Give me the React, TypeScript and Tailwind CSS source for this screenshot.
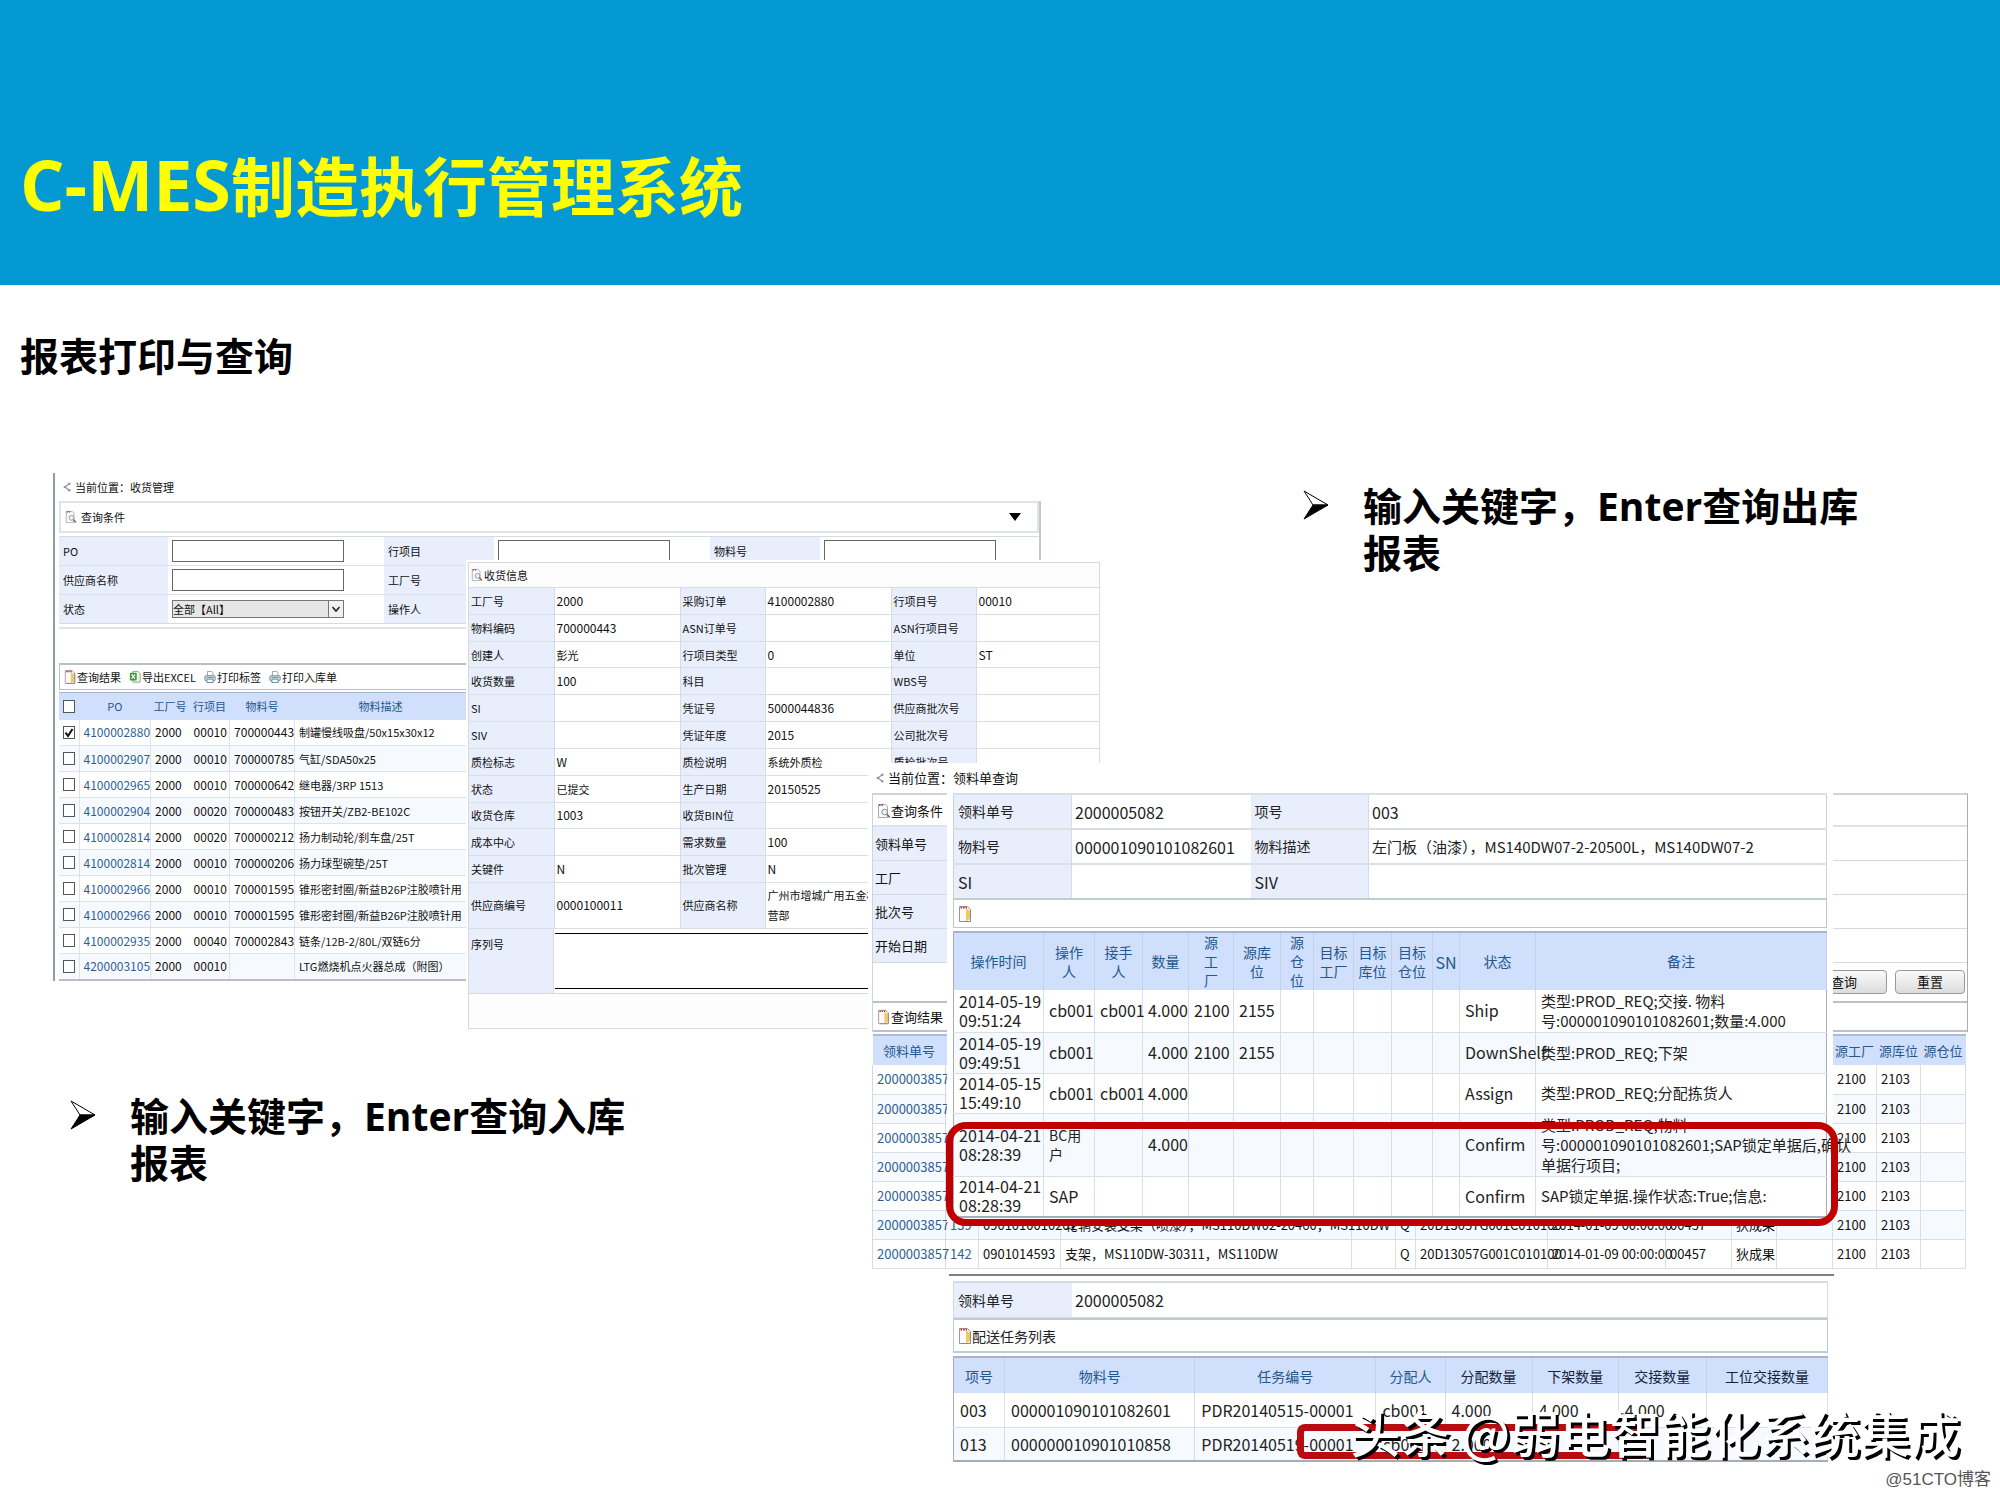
import React from "react";

const UI_FONT = "font-['Liberation_Sans_Narrow','Noto_Sans_CJK_SC',sans-serif]";
const HEAD_FONT = "font-['Open_Sans','Noto_Sans_CJK_SC',sans-serif]";

const CJK = /[\u4e00-\u9fff]/;

/* ---------- icons ---------- */

function SearchDoc({ className = "h-4 w-3" }: { className?: string }) {
  return (
    <svg viewBox="0 0 14 16" className={`shrink-0 ${className}`} aria-hidden="true">
      <path d="M1.5 1.5h7l2 2v11h-9z" fill="#fafafa" stroke="#a9a9b4" />
      <path d="M2 2h1.5M4.5 2H6" stroke="#7a3344" strokeWidth="1.4" />
      <circle cx="7.6" cy="9" r="2.8" fill="#eef3f7" stroke="#8b9096" />
      <path d="M9.8 11.2l3 3.3" stroke="#6f6f74" strokeWidth="1.8" />
    </svg>
  );
}

function NoteIcon({ className = "h-4 w-3" }: { className?: string }) {
  return (
    <svg viewBox="0 0 14 18" className={`shrink-0 ${className}`} aria-hidden="true">
      <path d="M1.5 1.5h8l3 3v12h-11z" fill="#fdfbfa" stroke="#a98f9c" />
      <path d="M8 3l4 3v8l-4 2.5z" fill="#f2c869" />
      <path d="M2.5 2.6h1.6M5 2.6h1.6M7.5 2.6H9" stroke="#a33a3a" strokeWidth="1.6" />
      <path d="M3 16.5h9.5V5" fill="none" stroke="#8d8792" />
    </svg>
  );
}

function ExcelIcon({ className = "h-4 w-3" }: { className?: string }) {
  return (
    <svg viewBox="0 0 14 16" className={`shrink-0 ${className}`} aria-hidden="true">
      <path d="M4.5 1.5h6l2.500 2.500v10h-8.500z" fill="#eef7ee" stroke="#7ca37c" />
      <rect x="1" y="3" width="8" height="9" rx="1" fill="#3c9a3c" />
      <path d="M3 5l4 5M7 5l-4 5" stroke="#fff" strokeWidth="1.4" />
    </svg>
  );
}

function PrinterIcon({ className = "h-4 w-3" }: { className?: string }) {
  return (
    <svg viewBox="0 0 14 16" className={`shrink-0 ${className}`} aria-hidden="true">
      <path d="M4 7V1.500h5l1.500 1.500v4" fill="#fff" stroke="#8a98a0" />
      <rect x="1" y="6.500" width="12" height="6" rx="1.500" fill="#cfe3e8" stroke="#5e8590" />
      <rect x="3.500" y="10.500" width="7" height="4" fill="#fff" stroke="#5e8590" />
      <path d="M3 8.500h8" stroke="#5e8590" />
    </svg>
  );
}

function CrumbIcon() {
  return (
    <svg viewBox="0 0 8 10" className="h-3 w-2 shrink-0" aria-hidden="true">
      <path d="M6.500 1.500L2 5l4.500 3.500" fill="none" stroke="#8e969e" strokeWidth="1.200" />
      <circle cx="6.300" cy="1.800" r="1.200" fill="#8e969e" />
      <circle cx="1.800" cy="5" r="1.200" fill="#8e969e" />
      <circle cx="6.300" cy="8.200" r="1.200" fill="#8e969e" />
    </svg>
  );
}

function ArrowBullet() {
  return (
    <svg viewBox="0 0 26 30" className="mt-2 h-[30px] w-[26px] shrink-0" aria-hidden="true">
      <path d="M1 1L25 15H10z" fill="#fff" stroke="#000" />
      <path d="M1 29L25 15H10z" fill="#000" stroke="#000" />
    </svg>
  );
}

/* ---------- shared pieces ---------- */

function Crumb({ children, className }: { children: React.ReactNode; className: string }) {
  return (
    <div className={`flex items-center gap-1 ${className}`}>
      <CrumbIcon />
      <span>{children}</span>
    </div>
  );
}

function Tick({ label, checked }: { label: string; checked?: boolean }) {
  return (
    <label className="relative mx-auto block h-[13px] w-[12px]">
      <input
        type="checkbox"
        aria-label={label}
        defaultChecked={checked}
        className="peer block h-full w-full appearance-none border border-[#555] bg-white"
      />
      <svg
        viewBox="0 0 12 13"
        className="pointer-events-none absolute inset-0 hidden h-full w-full peer-checked:block"
        aria-hidden="true"
      >
        <path d="M2.500 6.500l2.500 3.500L9.500 3" fill="none" stroke="#111" strokeWidth="2" />
      </svg>
    </label>
  );
}

function Cols({ widths }: { widths: number[] }) {
  return (
    <colgroup>
      {widths.map((w, i) => (
        <col key={i} style={{ width: w }} />
      ))}
    </colgroup>
  );
}

/* ---------- goods receipt list ---------- */

const receiptRows: [string, string, string, string, string][] = [
  ["4100002880", "00010", "700000443", "制罐慢线吸盘/50x15x30x12", "-1"],
  ["4100002907", "00010", "700000785", "气缸/SDA50x25", "-1"],
  ["4100002965", "00010", "700000642", "继电器/3RP 1513", "-1"],
  ["4100002904", "00020", "700000483", "按钮开关/ZB2-BE102C", "-1"],
  ["4100002814", "00020", "700000212", "扬力制动轮/刹车盘/25T", "扬"],
  ["4100002814", "00010", "700000206", "扬力球型碗垫/25T", "扬"],
  ["4100002966", "00010", "700001595", "锥形密封圈/新益B26P注胶喷针用", "-1"],
  ["4100002966", "00010", "700001595", "锥形密封圈/新益B26P注胶喷针用", "-1"],
  ["4100002935", "00040", "700002843", "链条/12B-2/80L/双链6分", "-1"],
  ["4200003105", "00010", "", "LTG燃烧机点火器总成（附图）", "-1"],
];

function FormLabel({ htmlFor, children }: { htmlFor: string; children: React.ReactNode }) {
  return (
    <label htmlFor={htmlFor} className="flex items-center bg-[#e8eefc] pl-1">
      {children}
    </label>
  );
}

const fieldBox = "h-[22px] w-[172px] border border-[#666] bg-white px-1 outline-none";

function ReceiptList() {
  return (
    <section
      className={`absolute left-[53px] top-[473px] w-[988px] border-l-2 border-l-[#8b9fa9] bg-white pl-1 text-[11px] leading-[14px] text-[#111] ${UI_FONT}`}
    >
      <Crumb className="h-7 pl-1">当前位置：收货管理</Crumb>
      <div className="border-r-2 border-[#c3c9cc]">
        <div className="flex h-8 items-center justify-between border-2 border-[#dde3e6] pl-1 pr-4">
          <span className="flex items-center gap-1">
            <SearchDoc />
            查询条件
          </span>
          <svg viewBox="0 0 12 8" className="h-2 w-3" aria-hidden="true">
            <path d="M0 0h12L6 8z" fill="#000" />
          </svg>
        </div>
        <div className="mt-[3px] grid auto-rows-[28px] grid-cols-[109px_216px_110px_216px_110px_1fr] gap-y-px border-y border-[#d3dbe3] bg-[#d8e0e8]">
          <FormLabel htmlFor="po">PO</FormLabel>
          <div className="flex items-center bg-white pl-1">
            <input id="po" className={fieldBox} />
          </div>
          <FormLabel htmlFor="line">行项目</FormLabel>
          <div className="flex items-center bg-white pl-1">
            <input id="line" className={fieldBox} />
          </div>
          <FormLabel htmlFor="material">物料号</FormLabel>
          <div className="flex items-center bg-white pl-1">
            <input id="material" className={fieldBox} />
          </div>
          <FormLabel htmlFor="vendor">供应商名称</FormLabel>
          <div className="flex items-center bg-white pl-1">
            <input id="vendor" className={fieldBox} />
          </div>
          <FormLabel htmlFor="plant">工厂号</FormLabel>
          <div className="col-span-3 flex items-center bg-white pl-1">
            <input id="plant" className={fieldBox} />
          </div>
          <FormLabel htmlFor="state">状态</FormLabel>
          <div className="flex items-center bg-white pl-1">
            <div className="relative">
              <select
                id="state"
                className="block h-[18px] w-[172px] appearance-none border border-[#777] bg-[#e6e6e6] leading-[14px] outline-none"
              >
                <option>全部【All】</option>
              </select>
              <svg viewBox="0 0 16 18" className="pointer-events-none absolute right-0 top-0 h-[18px] w-4" aria-hidden="true">
                <rect x=".5" y=".5" width="15" height="17" fill="#f1f1f1" stroke="#777" />
                <path d="M4.500 7L8 11l3.500-4" fill="none" stroke="#222" strokeWidth="1.600" />
              </svg>
            </div>
          </div>
          <FormLabel htmlFor="operator">操作人</FormLabel>
          <div className="col-span-3 flex items-center bg-white pl-1">
            <input id="operator" className={fieldBox} />
          </div>
        </div>
      </div>
      <div className="mt-[3px] h-9 border-t-2 border-[#dfe4e8]" />
      <div className="flex h-[27px] items-center gap-2 border border-t-2 border-[#b9c0c8] pl-1">
        <button type="button" className="flex items-center gap-px">
          <NoteIcon />
          查询结果
        </button>
        <button type="button" className="flex items-center gap-px">
          <ExcelIcon />
          导出EXCEL
        </button>
        <button type="button" className="flex items-center gap-px">
          <PrinterIcon />
          打印标签
        </button>
        <button type="button" className="flex items-center gap-px">
          <PrinterIcon />
          打印入库单
        </button>
      </div>
      <table className="mt-[2px] table-fixed border-collapse border-b-2 border-b-[#b9bec2] text-left">
        <Cols widths={[20, 65, 39, 40, 59, 172, 14]} />
        <thead>
          <tr className="h-[27px] border-t border-[#9fb6d8] bg-[#d0dffb] text-center text-[#24588f]">
            <th className="p-0">
              <Tick label="全选" />
            </th>
            <th className="p-0 font-normal">PO</th>
            <th className="p-0 font-normal">工厂号</th>
            <th className="p-0 font-normal">行项目</th>
            <th className="p-0 font-normal">物料号</th>
            <th className="p-0 font-normal">物料描述</th>
            <th className="p-0" />
          </tr>
        </thead>
        <tbody>
          {receiptRows.map((r, i) => (
            <tr key={i} className="h-[26px] whitespace-nowrap border-b border-[#dde3ea] even:bg-[#f6f9fe]">
              <td className="border-r border-[#dde3ea] p-0">
                <Tick label={r[0]} checked={i === 0} />
              </td>
              <td className="border-r border-[#dde3ea] p-0 pl-1 text-xs">
                <a href="#po" className="text-[#2d5f96]">
                  {r[0]}
                </a>
              </td>
              <td className="p-0 pl-1 text-xs">2000</td>
              <td className="border-r border-[#dde3ea] p-0 pl-1 text-xs">{r[1]}</td>
              <td className="border-r border-[#dde3ea] p-0 pl-1 text-xs">{r[2]}</td>
              <td className="border-r border-[#dde3ea] p-0 pl-1">{r[3]}</td>
              <td className="overflow-hidden p-0 pl-1">{r[4]}</td>
            </tr>
          ))}
        </tbody>
      </table>
    </section>
  );
}

/* ---------- goods receipt detail ---------- */

const detailRows: string[][] = [
  ["工厂号", "2000", "采购订单", "4100002880", "行项目号", "00010"],
  ["物料编码", "700000443", "ASN订单号", "", "ASN行项目号", ""],
  ["创建人", "彭光", "行项目类型", "0", "单位", "ST"],
  ["收货数量", "100", "科目", "", "WBS号", ""],
  ["SI", "", "凭证号", "5000044836", "供应商批次号", ""],
  ["SIV", "", "凭证年度", "2015", "公司批次号", ""],
  ["质检标志", "W", "质检说明", "系统外质检", "质检批次号", ""],
  ["状态", "已提交", "生产日期", "20150525", "", ""],
  ["收货仓库", "1003", "收货BIN位", "", "", ""],
  ["成本中心", "", "需求数量", "100", "", ""],
  ["关键件", "N", "批次管理", "N", "", ""],
];

function ReceiptDetail() {
  const label = "border-r border-[#d5dce6] bg-[#e8eefc] p-0 pl-[2px] text-left font-normal";
  const value = "border-r border-[#d5dce6] p-0 pl-[2px]";
  return (
    <section
      className={`absolute left-[466px] top-[560px] w-[634px] bg-white pl-[2px] pt-[2px] text-[11px] leading-[14px] text-[#111] ${UI_FONT}`}
    >
      <div className="border border-[#d5dadd]">
        <div className="flex h-6 items-center gap-px bg-[#fcfcfc] pl-[2px]">
          <SearchDoc />
          收货信息
        </div>
        <table className="h-[296px] w-full table-fixed border-collapse">
          <Cols widths={[85, 126, 85, 126, 85, 123]} />
          <tbody>
            {detailRows.map((r) => (
              <tr key={r[0]} className="border-y border-[#d8dfe0]">
                {r.map((c, i) =>
                  i % 2 === 0 ? (
                    <th key={i} scope="row" className={label}>
                      {c}
                    </th>
                  ) : (
                    <td key={i} className={`${value} ${CJK.test(c) ? "" : "text-xs"}`}>
                      {c}
                    </td>
                  ),
                )}
              </tr>
            ))}
          </tbody>
        </table>
        <table className="w-full table-fixed border-collapse">
          <Cols widths={[85, 126, 85, 334]} />
          <tbody>
            <tr className="h-[45px] border-b border-[#d8dfe0]">
              <th scope="row" className={label}>
                供应商编号
              </th>
              <td className={`${value} text-xs`}>0000100011</td>
              <th scope="row" className={label}>
                供应商名称
              </th>
              <td className="whitespace-nowrap p-0 pl-[2px] leading-5">
                广州市增城广用五金机电经
                <br />
                营部
              </td>
            </tr>
          </tbody>
        </table>
        <div className="flex h-[65px] border-b border-[#d5dadd]">
          <label htmlFor="serial" className="w-[85px] shrink-0 border-r border-[#d5dce6] bg-[#e8eefc] pl-[2px] pt-2">
            序列号
          </label>
          <textarea
            id="serial"
            className="my-1 ml-px block min-w-0 flex-1 resize-none border-y border-y-black bg-white outline-none"
          />
        </div>
        <div className="h-[34px] bg-[#fdfdfd]" />
      </div>
    </section>
  );
}

/* ---------- requisition page ---------- */

const requisitionWidths = [73, 33, 82, 291, 44, 20, 132, 118, 66, 45, 56, 44, 44, 45];

const requisitionCells: Record<number, string[]> = {
  5: ["139", "0901010010201", "轮辋安装支架（喷漆），MS110DW02-20460，MS110DW", "", "Q", "20D13057G001C010100", "2014-01-09 00:00:00", "00457", "狄成果"],
  6: ["142", "0901014593", "支架，MS110DW-30311，MS110DW", "", "Q", "20D13057G001C010100", "2014-01-09 00:00:00", "00457", "狄成果"],
};

function RequisitionPage() {
  return (
    <section
      className={`absolute left-[868px] top-[763px] w-[1100px] bg-white pl-1 text-[13px] leading-4 text-[#111] ${UI_FONT}`}
    >
      <Crumb className="h-[30px] pl-1">当前位置：领料单查询</Crumb>
      <div className="border-x border-t-2 border-[#cfd4da] border-r-[#a9adb5]">
        <div className="mt-px flex h-[31px] items-center border-b-2 border-[#dde2e6] pl-1">
          <SearchDoc className="h-5 w-[14px]" />
          查询条件
        </div>
        {["领料单号", "工厂", "批次号", "开始日期"].map((t) => (
          <div key={t} className="flex h-[34px] border-b border-[#d3d9df]">
            <span className="flex w-[75px] items-center bg-[#e8eefc] pl-[2px]">{t}</span>
          </div>
        ))}
        <div className="flex h-[38px] items-center justify-end gap-2 pr-[2px]">
          <button type="button" className="h-6 w-[70px] rounded-sm border border-[#999] bg-gradient-to-b from-[#fafafa] to-[#dcdcdc]">
            <span className="pr-4">查询</span>
          </button>
          <button type="button" className="h-6 w-[70px] rounded-sm border border-[#999] bg-gradient-to-b from-[#fafafa] to-[#dcdcdc]">
            重置
          </button>
        </div>
        <div className="flex h-[31px] items-center gap-px border-y-2 border-[#bcc1c8] pl-1">
          <NoteIcon className="h-4 w-[13px]" />
          查询结果
          <span className="pl-1">
            <ExcelIcon className="h-4 w-[14px]" />
          </span>
        </div>
      </div>
      <table className="mt-[2px] w-[1093px] table-fixed border-collapse">
        <Cols widths={requisitionWidths} />
        <thead>
          <tr className="h-[30px] border-t-2 border-[#a9bcd8] bg-[#d0dffb] text-[#24588f]">
            <th className="p-0 font-normal">领料单号</th>
            <th colSpan={10} className="p-0" />
            <th className="p-0 font-normal">源工厂</th>
            <th className="p-0 font-normal">源库位</th>
            <th className="p-0 font-normal">源仓位</th>
          </tr>
        </thead>
        <tbody>
          {[0, 1, 2, 3, 4, 5, 6].map((i) => {
            const mid = requisitionCells[i] ?? ["", "", "", "", "", "", "", "", ""];
            return (
              <tr key={i} className="h-[29px] whitespace-nowrap border-b border-[#d9dfe6] even:bg-[#f6f9fe]">
                <td className="border-x border-[#d3d9df] p-0 pl-1">
                  <a href="#requisition" className="text-[#2d5f96]">
                    2000003857
                  </a>
                </td>
                {mid.map((c, k) => (
                  <td
                    key={k}
                    className={`border-r border-[#d9dfe6] p-0 pl-1 ${k === 0 ? "text-[#2d5f96]" : ""}`}
                  >
                    {c}
                  </td>
                ))}
                <td className="border-r border-[#d9dfe6] p-0" />
                <td className="border-r border-[#d9dfe6] p-0 pl-1">2100</td>
                <td className="border-r border-[#d9dfe6] p-0 pl-1">2103</td>
                <td className="border-r border-[#d9dfe6] p-0" />
              </tr>
            );
          })}
        </tbody>
      </table>
      <div className="mr-[134px] ml-[77px] mt-[5px] h-[2px] bg-[#7f7f7f]" />
    </section>
  );
}

/* ---------- operation history dialog ---------- */

const logHead = ["操作时间", "操作人", "接手人", "数量", "源工厂", "源库位", "源仓位", "目标工厂", "目标库位", "目标仓位", "SN", "状态", "备注"];

type LogRow = { time: [string, string]; who: string; next: string; qty: string; plant: string; bin: string; state: string; note: string[]; h: string };

const logRows: LogRow[] = [
  { time: ["2014-05-19", "09:51:24"], who: "cb001", next: "cb001", qty: "4.000", plant: "2100", bin: "2155", state: "Ship", note: ["类型:PROD_REQ;交接. 物料", "号:000001090101082601;数量:4.000"], h: "h-[42px]" },
  { time: ["2014-05-19", "09:49:51"], who: "cb001", next: "", qty: "4.000", plant: "2100", bin: "2155", state: "DownShelf", note: ["类型:PROD_REQ;下架"], h: "h-[41px]" },
  { time: ["2014-05-15", "15:49:10"], who: "cb001", next: "cb001", qty: "4.000", plant: "", bin: "", state: "Assign", note: ["类型:PROD_REQ;分配拣货人"], h: "h-[40px]" },
  { time: ["2014-04-21", "08:28:39"], who: "BC用户", next: "", qty: "4.000", plant: "", bin: "", state: "Confirm", note: ["类型:PROD_REQ;物料", "号:000001090101082601;SAP锁定单据后,确认", "单据行项目;"], h: "h-[63px]" },
  { time: ["2014-04-21", "08:28:39"], who: "SAP", next: "", qty: "", plant: "", bin: "", state: "Confirm", note: ["SAP锁定单据.操作状态:True;信息:"], h: "h-[41px]" },
];

function HistoryDialog() {
  const th = "border-r border-[#d5dce6] bg-[#e8eefc] p-0 pl-1 text-left font-normal";
  const td = "p-0 pl-[3px] text-base leading-5";
  const cell = "border-r border-[#d9dfe6] p-0 pl-[5px] text-base leading-[19px]";
  return (
    <section
      className={`absolute left-[947px] top-[791px] w-[886px] bg-white px-[6px] pb-1 pt-[2px] text-[14px] leading-[19px] text-[#222] ${UI_FONT}`}
    >
      <table className="w-full table-fixed border-collapse border border-[#c9d2d6]">
        <Cols widths={[118, 179, 118, 458]} />
        <tbody>
          <tr className="h-[35px] border-y-2 border-[#d9dfe2]">
            <th scope="row" className={th}>领料单号</th>
            <td className={td}>2000005082</td>
            <th scope="row" className={th}>项号</th>
            <td className={td}>003</td>
          </tr>
          <tr className="h-[35px] border-y-2 border-[#d9dfe2]">
            <th scope="row" className={th}>物料号</th>
            <td className={td}>000001090101082601</td>
            <th scope="row" className={th}>物料描述</th>
            <td className="p-0 pl-[3px] text-[15px]">左门板（油漆），MS140DW07-2-20500L，MS140DW07-2</td>
          </tr>
          <tr className="h-[35px] border-b-2 border-[#bccfc9]">
            <th scope="row" className={`${th} text-base`}>SI</th>
            <td className={td} />
            <th scope="row" className={`${th} text-base`}>SIV</th>
            <td className={td} />
          </tr>
        </tbody>
      </table>
      <div className="flex h-7 items-center border border-t-0 border-[#bfc5cc] pl-1">
        <NoteIcon className="h-5 w-[14px]" />
      </div>
      <table className="mt-[3px] w-full table-fixed border-collapse border border-b-2 border-[#a7adb5]">
        <Cols widths={[90, 51, 48, 46, 45, 47, 33, 40, 38, 41, 27, 76, 291]} />
        <thead>
          <tr className="h-[58px] border-t-2 border-[#a9b4cc] bg-[#d0dffb] text-[#24588f]">
            {logHead.map((h) => (
              <th
                key={h}
                scope="col"
                className={`border-r border-[#c3d2ea] font-normal ${
                  h === "源仓位" ? "px-2 py-0" : h.length === 3 ? "px-[9px] py-0" : h === "SN" ? "p-0 text-base" : "px-1 py-0"
                }`}
              >
                {h}
              </th>
            ))}
          </tr>
        </thead>
        <tbody>
          {logRows.map((r, i) => (
            <tr key={i} className={`${r.h} border-b border-[#d9dfe6] even:bg-[#f6f9fe]`}>
              <td className={cell}>
                {r.time[0]}
                <br />
                {r.time[1]}
              </td>
              <td className={`border-r border-[#d9dfe6] p-0 pl-[5px] pr-3 leading-[19px] ${CJK.test(r.who) ? "text-[14px]" : "text-base"}`}>
                {r.who}
              </td>
              <td className={cell}>{r.next}</td>
              <td className={cell}>{r.qty}</td>
              <td className={cell}>{r.plant}</td>
              <td className={cell}>{r.bin}</td>
              <td className={cell} />
              <td className={cell} />
              <td className={cell} />
              <td className={cell} />
              <td className={cell} />
              <td className={cell}>{r.state}</td>
              <td className="whitespace-nowrap p-0 pl-[5px] text-[15px] leading-5">
                {r.note.map((n) => (
                  <div key={n}>{n}</div>
                ))}
              </td>
            </tr>
          ))}
        </tbody>
      </table>
    </section>
  );
}

/* ---------- delivery task dialog ---------- */

const taskHead = ["项号", "物料号", "任务编号", "分配人", "分配数量", "下架数量", "交接数量", "工位交接数量"];
const taskRows = [
  ["003", "000001090101082601", "PDR20140515-00001", "cb001", "4.000", "4.000", "4.000", ""],
  ["013", "000000010901010858", "PDR20140519-00001", "cb001", "2.000", "", "", ""],
];

function TaskDialog() {
  return (
    <section
      className={`absolute left-[953px] top-[1281px] w-[875px] bg-white text-[14px] leading-5 text-[#222] ${UI_FONT}`}
    >
      <dl className="flex h-[37px] items-stretch border border-t-2 border-[#d5dce0]">
        <dt className="flex w-[118px] items-center bg-[#e8eefc] pl-1">领料单号</dt>
        <dd className="flex items-center pl-[3px] text-base leading-5">2000005082</dd>
      </dl>
      <div className="flex h-[35px] items-center border border-y-2 border-[#bfcbd4] pl-1">
        <NoteIcon className="h-5 w-[14px]" />
        配送任务列表
      </div>
      <table className="mt-[3px] w-full table-fixed border-collapse border border-b-2 border-[#a7adb5]">
        <Cols widths={[51, 190, 181, 69, 87, 86, 88, 121]} />
        <thead>
          <tr className="h-9 border-t-2 border-[#a9b4cc] bg-[#d0dffb]">
            {taskHead.map((h, i) => (
              <th
                key={h}
                scope="col"
                className={`border-r border-[#c3d2ea] p-0 font-normal ${i < 4 ? "text-[#24588f]" : "text-[#15233f]"}`}
              >
                {h}
              </th>
            ))}
          </tr>
        </thead>
        <tbody>
          {taskRows.map((r) => (
            <tr key={r[0]} className="h-[34px] border-b border-[#d9dfe6] text-base leading-5 even:bg-[#f6f9fe]">
              {r.map((c, i) => (
                <td key={i} className="border-r border-[#d9dfe6] p-0 pl-[6px]">
                  {c}
                </td>
              ))}
            </tr>
          ))}
        </tbody>
      </table>
    </section>
  );
}

/* ---------- slide ---------- */

function Point({ className, children }: { className: string; children: React.ReactNode }) {
  return (
    <div className={`absolute flex items-start gap-[34px] ${className}`}>
      <ArrowBullet />
      <p className={`text-[39px] font-bold leading-[47px] text-black ${HEAD_FONT}`}>{children}</p>
    </div>
  );
}

export default function App() {
  return (
    <main className="relative min-h-[1500px] w-full overflow-hidden bg-white">
      <header className="flex h-[285px] items-center bg-[#0499d2] pl-5 pt-[86px]">
        <h1 className={`text-[64px] font-bold leading-[86px] text-[#ffff00] ${HEAD_FONT}`}>
          <span className="text-[70px]">C-MES</span>制造执行管理系统
        </h1>
      </header>
      <h2 className={`pl-5 pt-[46px] text-[39px] font-bold leading-[50px] text-black ${HEAD_FONT}`}>报表打印与查询</h2>

      <ReceiptList />
      <ReceiptDetail />
      <RequisitionPage />
      <HistoryDialog />
      <TaskDialog />

      <div className="pointer-events-none absolute left-[946px] top-[1122px] h-[104px] w-[892px] rounded-[20px] border-[7px] border-[#c00000]" />
      <div className="pointer-events-none absolute left-[1297px] top-[1424px] h-[35px] w-[346px] rounded-l-lg border-[7px] border-r-0 border-[#b80c10]" />

      <Point className="left-[1303px] top-[482px]">
        输入关键字，Enter查询出库
        <br />
        报表
      </Point>
      <Point className="left-[70px] top-[1092px]">
        输入关键字，Enter查询入库
        <br />
        报表
      </Point>

      <p className="absolute right-[40px] top-[1396px] whitespace-nowrap font-['Noto_Sans_CJK_SC',sans-serif] text-[50px] font-medium leading-[70px] text-white [text-shadow:3px_3px_0_#000]">
        头条 @弱电智能化系统集成
      </p>
      <p className="absolute bottom-[8px] right-[9px] font-['Liberation_Sans','Noto_Sans_CJK_SC',sans-serif] text-[17px] leading-6 text-[#555]">
        @51CTO博客
      </p>
    </main>
  );
}
